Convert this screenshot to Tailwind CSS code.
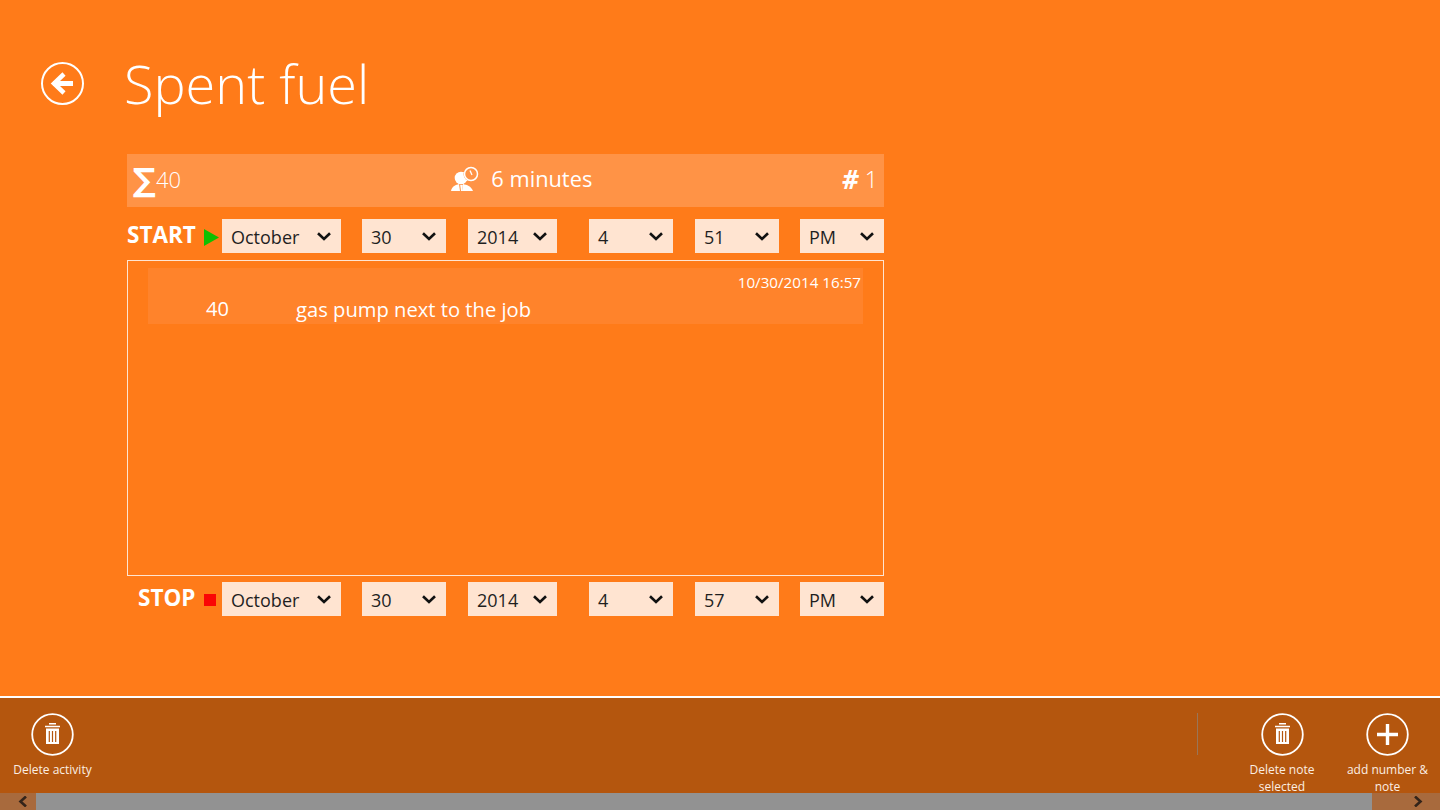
<!doctype html>
<html><head><meta charset="utf-8"><script src="https://cdn.jsdelivr.net/npm/@tailwindcss/browser@4"></script></head>
<body class="m-0">
<div class="w-[1440px] h-[810px] overflow-hidden flex flex-col bg-[#ff7b19] text-white font-['Open_Sans',sans-serif]">
  <main class="h-[696px] shrink-0">
    <header class="h-[154px] flex items-start">
      <svg class="ml-[41px] mt-[61px] w-[44px] h-[44px]" viewBox="0 0 44 44" fill="none" stroke="white"><circle cx="21.5" cy="22.5" r="20.5" stroke-width="2"/><path d="M12 22.5H32" stroke-width="5"/><path d="M23 13L13 22.5L23 32" stroke-width="4.5"/></svg>
      <h1 class="ml-[39px] mt-[46px] text-[54px] leading-[74px] font-light">Spent fuel</h1>
    </header>
    <section class="ml-[127px] w-[757px]">
      <div class="h-[53px] bg-[#ff9346] grid grid-cols-3 items-center text-[22px] leading-[30px]">
        <div class="flex items-center pl-[6px]"><span class="font-bold text-[32px] leading-[36px] font-['DejaVu_Sans',sans-serif] w-[20px] -mt-[1px]">∑</span><span class="ml-[3px] font-light text-[22px] -mt-[3px]">40</span></div>
        <div class="flex items-center ml-[71px] whitespace-nowrap -mt-[3px]">
          <svg class="w-[30px] h-[26px]" viewBox="0 0 30 26" fill="white"><circle cx="11" cy="12" r="6.3"/><circle cx="14" cy="11" r="5" /><path d="M1 25C2 20 6 19 9 18L10 25ZM12 25L13 18C17 19 21 20 23 25Z"/><path d="M10.2 19H12.8L12 25H11Z"/><circle cx="21" cy="8" r="7.5" fill="#ff9346"/><circle cx="21" cy="8" r="6.5" fill="none" stroke="white" stroke-width="1.5"/><path d="M20 4.5L22 9" stroke="white" stroke-width="1.3"/></svg>
          <span class="ml-[11px] font-normal text-[21.8px]">6 minutes</span>
        </div>
        <div class="flex items-center justify-end pr-[6px] -mt-[3px]"><span class="font-bold text-[26px] leading-[30px] italic">#</span><span class="ml-[6px] font-light text-[23px]">1</span></div>
      </div>

      <div class="h-[34px] mt-[12px] flex text-[18px] text-[#1f1f1f]">
        <div class="w-[95px] shrink-0 flex items-center relative text-white">
          <span class="font-bold text-[22.5px] leading-[32px] -mt-[2px]">START</span>
          <svg class="absolute left-[77px] top-[10px] w-[15px] h-[17px]" viewBox="0 0 15 17"><path d="M0 0L15 8.5L0 17Z" fill="#10c000"/></svg>
        </div>
        <div class="w-[119px] ml-0 bg-[#ffe4d1] flex items-center justify-between pl-[9px] pr-[10px]"><span class="mt-[2px]">October</span><svg class="w-[14px] h-[9px]" viewBox="0 0 14 9" fill="none" stroke="#111" stroke-width="2.6"><path d="M1 1.2L7 7L13 1.2"/></svg></div>
        <div class="w-[84px] ml-[21px] bg-[#ffe4d1] flex items-center justify-between pl-[9px] pr-[10px]"><span class="mt-[2px]">30</span><svg class="w-[14px] h-[9px]" viewBox="0 0 14 9" fill="none" stroke="#111" stroke-width="2.6"><path d="M1 1.2L7 7L13 1.2"/></svg></div>
        <div class="w-[89px] ml-[22px] bg-[#ffe4d1] flex items-center justify-between pl-[9px] pr-[10px]"><span class="mt-[2px]">2014</span><svg class="w-[14px] h-[9px]" viewBox="0 0 14 9" fill="none" stroke="#111" stroke-width="2.6"><path d="M1 1.2L7 7L13 1.2"/></svg></div>
        <div class="w-[84px] ml-[32px] bg-[#ffe4d1] flex items-center justify-between pl-[9px] pr-[10px]"><span class="mt-[2px]">4</span><svg class="w-[14px] h-[9px]" viewBox="0 0 14 9" fill="none" stroke="#111" stroke-width="2.6"><path d="M1 1.2L7 7L13 1.2"/></svg></div>
        <div class="w-[84px] ml-[22px] bg-[#ffe4d1] flex items-center justify-between pl-[9px] pr-[10px]"><span class="mt-[2px]">51</span><svg class="w-[14px] h-[9px]" viewBox="0 0 14 9" fill="none" stroke="#111" stroke-width="2.6"><path d="M1 1.2L7 7L13 1.2"/></svg></div>
        <div class="w-[84px] ml-[21px] bg-[#ffe4d1] flex items-center justify-between pl-[9px] pr-[10px]"><span class="mt-[2px]">PM</span><svg class="w-[14px] h-[9px]" viewBox="0 0 14 9" fill="none" stroke="#111" stroke-width="2.6"><path d="M1 1.2L7 7L13 1.2"/></svg></div>
      </div>

      <div class="h-[316px] mt-[7px] border border-[#ffe4d1] pt-[7px] pl-[20px] pr-[20px]">
        <div class="h-[56px] bg-[#ff832b] relative">
          <div class="absolute right-[2px] top-[3px] text-[15.2px] leading-[22px]">10/30/2014 16:57</div>
          <div class="absolute left-[58px] top-[27px] text-[20px] leading-[28px]">40</div>
          <div class="absolute left-[148px] top-[27px] text-[20.2px] leading-[28px]">gas pump next to the job</div>
        </div>
      </div>

      <div class="h-[34px] mt-[6px] flex text-[18px] text-[#1f1f1f]">
        <div class="w-[95px] shrink-0 flex items-center relative text-white">
          <span class="ml-[11px] font-bold text-[22.5px] leading-[32px] -mt-[2px]">STOP</span>
          <div class="absolute left-[77px] top-[12px] w-[12px] h-[12px] bg-[#fa0505]"></div>
        </div>
        <div class="w-[119px] bg-[#ffe4d1] flex items-center justify-between pl-[9px] pr-[10px]"><span class="mt-[2px]">October</span><svg class="w-[14px] h-[9px]" viewBox="0 0 14 9" fill="none" stroke="#111" stroke-width="2.6"><path d="M1 1.2L7 7L13 1.2"/></svg></div>
        <div class="w-[84px] ml-[21px] bg-[#ffe4d1] flex items-center justify-between pl-[9px] pr-[10px]"><span class="mt-[2px]">30</span><svg class="w-[14px] h-[9px]" viewBox="0 0 14 9" fill="none" stroke="#111" stroke-width="2.6"><path d="M1 1.2L7 7L13 1.2"/></svg></div>
        <div class="w-[89px] ml-[22px] bg-[#ffe4d1] flex items-center justify-between pl-[9px] pr-[10px]"><span class="mt-[2px]">2014</span><svg class="w-[14px] h-[9px]" viewBox="0 0 14 9" fill="none" stroke="#111" stroke-width="2.6"><path d="M1 1.2L7 7L13 1.2"/></svg></div>
        <div class="w-[84px] ml-[32px] bg-[#ffe4d1] flex items-center justify-between pl-[9px] pr-[10px]"><span class="mt-[2px]">4</span><svg class="w-[14px] h-[9px]" viewBox="0 0 14 9" fill="none" stroke="#111" stroke-width="2.6"><path d="M1 1.2L7 7L13 1.2"/></svg></div>
        <div class="w-[84px] ml-[22px] bg-[#ffe4d1] flex items-center justify-between pl-[9px] pr-[10px]"><span class="mt-[2px]">57</span><svg class="w-[14px] h-[9px]" viewBox="0 0 14 9" fill="none" stroke="#111" stroke-width="2.6"><path d="M1 1.2L7 7L13 1.2"/></svg></div>
        <div class="w-[84px] ml-[21px] bg-[#ffe4d1] flex items-center justify-between pl-[9px] pr-[10px]"><span class="mt-[2px]">PM</span><svg class="w-[14px] h-[9px]" viewBox="0 0 14 9" fill="none" stroke="#111" stroke-width="2.6"><path d="M1 1.2L7 7L13 1.2"/></svg></div>
      </div>
    </section>
  </main>

  <footer class="h-[97px] shrink-0 border-t-2 border-white bg-[#b4560e] flex text-[12px] leading-[17px] text-[#fbeee3]">
    <div class="w-[105px] flex flex-col items-center pt-[15px]">
      <svg class="w-[43px] h-[43px] shrink-0" viewBox="0 0 43 43" fill="none" stroke="white"><circle cx="21.5" cy="21.5" r="20.3" stroke-width="1.8"/><path d="M14 13.5H29M18 10.8H25" stroke-width="1.6"/><path d="M15 15.5V31H28V15.5Z" fill="white" stroke="none"/><path d="M18.3 18V29M21.5 18V29M24.7 18V29" stroke="#b4560e" stroke-width="1.2"/></svg>
      <div class="mt-[5px] whitespace-nowrap shrink-0">Delete activity</div>
    </div>
    <div class="flex-1"></div>
    <div class="w-[1px] h-[42px] -mr-[1px] mt-[15px] bg-[#9a7557]"></div>
    <div class="w-[170px] flex flex-col items-center pt-[15px] text-center shrink-0">
      <svg class="w-[43px] h-[43px] shrink-0" viewBox="0 0 43 43" fill="none" stroke="white"><circle cx="21.5" cy="21.5" r="20.3" stroke-width="1.8"/><path d="M14 13.5H29M18 10.8H25" stroke-width="1.6"/><path d="M15 15.5V31H28V15.5Z" fill="white" stroke="none"/><path d="M18.3 18V29M21.5 18V29M24.7 18V29" stroke="#b4560e" stroke-width="1.2"/></svg>
      <div class="mt-[5px] w-[80px] shrink-0">Delete note selected</div>
    </div>
    <div class="w-[105px] -ml-[32px] flex flex-col items-center pt-[15px] text-center shrink-0">
      <svg class="w-[43px] h-[43px] shrink-0" viewBox="0 0 43 43" fill="none" stroke="white"><circle cx="21.5" cy="21.5" r="20.3" stroke-width="1.8"/><path d="M11 21.5H32M21.5 11V32" stroke-width="3.4"/></svg>
      <div class="mt-[5px] w-[90px] shrink-0">add number &amp; note</div>
    </div>
  </footer>
  <div class="h-[17px] shrink-0 flex bg-[#929292]">
    <div class="w-[36px] bg-[#a86a3d] flex items-center justify-end pr-[8px]"><svg class="w-[10px] h-[11px]" viewBox="0 0 10 11" fill="none" stroke="#33241a" stroke-width="2.6"><path d="M8 0.5L2.5 5.5L8 10.5"/></svg></div>
    <div class="flex-1"></div>
    <div class="w-[68px] bg-[#a86a3d] flex items-center justify-end pr-[17px]"><svg class="w-[10px] h-[11px]" viewBox="0 0 10 11" fill="none" stroke="#33241a" stroke-width="2.6"><path d="M2 0.5L7.5 5.5L2 10.5"/></svg></div>
  </div>
</div>
</body></html>
